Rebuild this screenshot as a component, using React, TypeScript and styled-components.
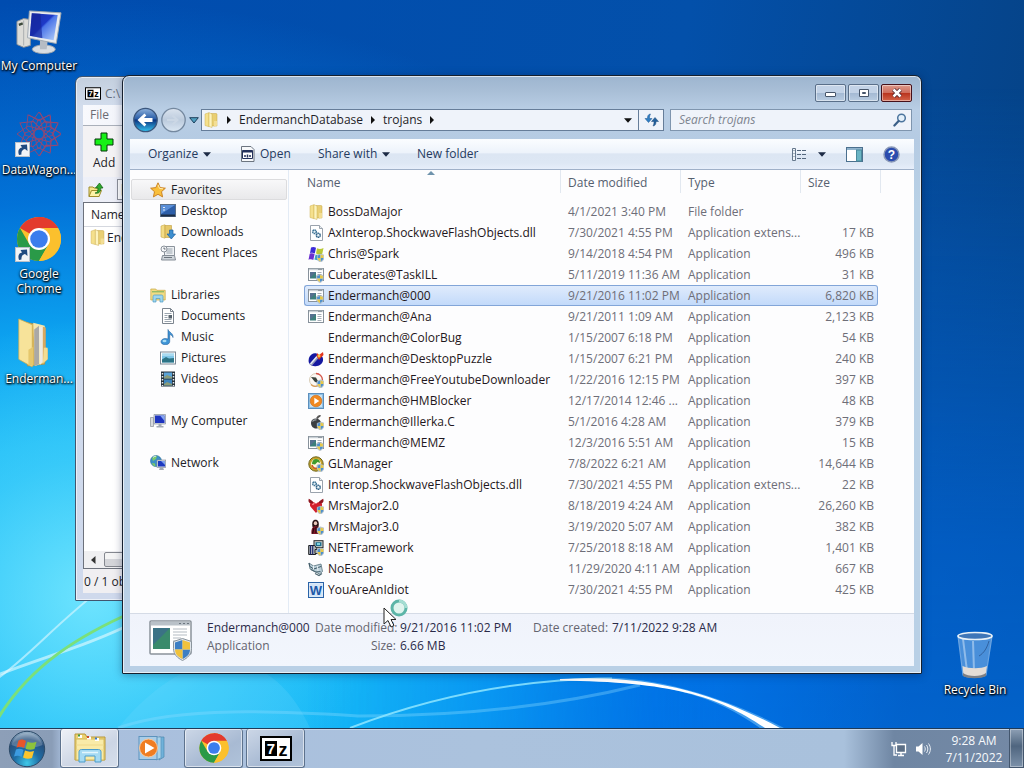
import React from "react";
import styled, { createGlobalStyle, css } from "styled-components";

const GlobalStyle = createGlobalStyle`
  * { box-sizing: border-box; }
  body {
    margin: 0;
    font-family: "Open Sans", "Noto Sans", sans-serif;
    font-size: 12px;
    line-height: 16px;
    color: #1e1e28;
  }
  button, input {
    font: inherit;
    color: inherit;
    margin: 0;
    padding: 0;
    border: 0;
    background: none;
  }
  ul { list-style: none; margin: 0; padding: 0; }
  svg { display: block; flex: none; }
`;

/* ---------- desktop ---------- */

const Screen = styled.div`
  display: flex;
  flex-direction: column;
  height: 100vh;
  overflow: hidden;
`;

const Desktop = styled.main`
  position: relative;
  flex: 1;
  min-height: 0;
  overflow: hidden;
  background:
    radial-gradient(ellipse 28% 38% at 9% 82%, rgba(125, 235, 255, 0.85) 0%, rgba(90, 220, 252, 0.5) 50%, transparent 100%),
    radial-gradient(ellipse 80% 92% at 8% 92%, #16baf8 0%, #14b6f6 34%, #0ca2f0 50%, rgba(2, 124, 226, 0.8) 70%, transparent 100%),
    linear-gradient(100deg, #004cb0 0%, #0350aa 60%, #06407f 100%);
  background-color: #0350aa;
`;

const Glow = styled.div`
  position: absolute;
  inset: 0;
  background: linear-gradient(180deg, transparent 12%, rgba(0, 112, 240, 0.55) 75%, rgba(0, 120, 250, 0.6) 100%);
  mask-image: linear-gradient(90deg, transparent 30%, #000 70%);
`;

const Wallpaper = styled.svg`
  position: absolute;
  left: 0;
  bottom: 0;
  width: 100%;
  height: 180px;
`;

const Shortcut = styled.button<{ $x: number; $y: number }>`
  position: absolute;
  left: ${(p) => p.$x}px;
  top: ${(p) => p.$y}px;
  width: 78px;
  display: flex;
  flex-direction: column;
  align-items: center;
  gap: 3px;
  line-height: 15px;
  color: #fff;
  text-align: center;
  text-shadow: 0 1px 2px #000, 1px 1px 2px #000, 0 0 3px rgba(0, 0, 0, 0.6);
`;

const BinShortcut = styled(Shortcut)`
  left: auto;
  top: auto;
  right: 10px;
  bottom: 31px;
`;

/* ---------- windows ---------- */

const WindowFrame = styled.section`
  position: absolute;
  display: flex;
  flex-direction: column;
  border: 1px solid #16202e;
  border-radius: 7px 7px 1px 1px;
`;

const ArchiveWindow = styled(WindowFrame)`
  left: 75px;
  top: 76px;
  bottom: 127px;
  width: 200px;
  padding: 0 7px 7px;
  border-color: #41566f;
  background: linear-gradient(180deg, #c3cfde 0, #d3dded 30px, #cfd9ec 100%);
  box-shadow: inset 0 0 0 1px rgba(255, 255, 255, 0.6);
`;

const ArchiveTitle = styled.div`
  display: flex;
  align-items: center;
  gap: 4px;
  height: 28px;
  padding: 5px 2px 0;
  color: #67707e;
`;

const ArchiveMenu = styled.div`
  height: 20px;
  padding: 0 7px;
  display: flex;
  align-items: center;
  color: #6b6b72;
  background: linear-gradient(90deg, #f8f9fd, #dfe4f1);
`;

const ArchiveTools = styled.div`
  height: 52px;
  padding: 6px 10px 0;
  border-top: 1px solid #aab0ba;
  background: #f3f2f4;
`;

const AddButton = styled.button`
  display: flex;
  flex-direction: column;
  align-items: center;
  gap: 3px;
`;

const ArchivePath = styled.div`
  display: flex;
  align-items: center;
  gap: 13px;
  height: 25px;
  padding: 0 5px;
  background: linear-gradient(90deg, #eef0f8, #e3e6f1);
`;

const PathBox = styled.div`
  flex: 1;
  height: 21px;
  padding: 2px;
  border: 1px solid #8d9099;
  background: #fff;
`;

const ArchiveList = styled.div`
  flex: 1;
  display: flex;
  flex-direction: column;
  border: 1px solid #6d727c;
  background: #fff;
`;

const ArchiveHeader = styled.div`
  height: 24px;
  padding: 4px 7px;
  border-bottom: 1px solid #d5d8df;
`;

const ArchiveItem = styled.div`
  display: flex;
  align-items: center;
  gap: 1px;
  height: 21px;
  padding: 0 5px;
`;

const ScrollTrack = styled.div`
  display: flex;
  align-items: center;
  gap: 8px;
  height: 17px;
  margin-top: auto;
  padding-left: 7px;
  background: #efeff1;
`;

const ScrollThumb = styled.div`
  flex: 1;
  height: 15px;
  border: 1px solid #85888f;
  border-radius: 2px;
  background: linear-gradient(180deg, #f4f4f4 0 50%, #d4d5d9 50% 100%);
`;

const ArchiveStatus = styled.div`
  height: 24px;
  padding: 5px 1px;
  background: #f0eff2;
`;

const ExplorerWindow = styled(WindowFrame)`
  left: 122px;
  top: 75px;
  right: 102px;
  bottom: 54px;
  padding: 0 7px 7px;
  background: linear-gradient(180deg, #9db5cf 0, #a8bed6 14px, #b9cee5 34px, #b5cbe3 64px, #b9d1e6 130px, #b9d0e6 100%);
  box-shadow: inset 0 0 0 1px rgba(255, 255, 255, 0.65), 0 1px 8px rgba(0, 20, 60, 0.35);
`;

const TitleBar = styled.header`
  display: flex;
  justify-content: flex-end;
  align-items: flex-end;
  gap: 2px;
  height: 26px;
  padding-right: 2px;
`;

const CaptionButton = styled.button<{ $close?: boolean }>`
  display: grid;
  place-items: center;
  width: 31px;
  height: 18px;
  border: 1px solid #5a6f89;
  border-radius: 2px;
  box-shadow: inset 0 0 0 1px rgba(255, 255, 255, 0.45);
  background: linear-gradient(180deg, #c3d3e7 0 50%, #a3b9d3 50%, #b9cde2 100%);
  ${(p) =>
    p.$close &&
    css`
      border-color: #45101a;
      background: linear-gradient(180deg, #dd9a8c 0%, #cf6d5c 48%, #b8321c 50%, #d4644a 100%);
    `}
`;

const NavRow = styled.div`
  display: flex;
  align-items: center;
  height: 37px;
  padding: 0 2px 1px 3px;
`;

const HistoryButtons = styled.div`
  display: flex;
  align-items: center;
  gap: 3px;
  padding-right: 2px;
`;

const AddressBar = styled.nav`
  flex: 1;
  display: flex;
  align-items: center;
  height: 22px;
  border: 1px solid #667d99;
  background: #eff3fa;
`;

const Crumbs = styled.div`
  flex: 1;
  display: flex;
  align-items: center;
  gap: 8px;
  padding-left: 1px;
`;

const RefreshButton = styled.button`
  display: grid;
  place-items: center;
  align-self: stretch;
  width: 25px;
  margin-left: 6px;
  border-left: 1px solid #667d99;
`;

const SearchBox = styled.label`
  display: flex;
  align-items: center;
  width: 242px;
  height: 22px;
  margin-left: 6px;
  padding: 0 4px 0 8px;
  border: 1px solid #7f95ae;
  background: #eff3fa;
`;

const SearchInput = styled.input`
  flex: 1;
  min-width: 0;
  outline: 0;
  &::placeholder {
    color: #7d848f;
    font-style: italic;
    opacity: 1;
  }
`;

const CommandBar = styled.div`
  display: flex;
  align-items: center;
  height: 31px;
  padding: 0 14px 0 18px;
  border-bottom: 1px solid #9fb0c8;
  color: #253a5e;
  background: linear-gradient(180deg, #fbfdff 0%, #edf3fb 45%, #dce6f3 50%, #dde7f4 80%, #e6eefa 100%);
`;

const CommandButton = styled.button<{ $width?: number }>`
  display: flex;
  align-items: center;
  gap: 5px;
  width: ${(p) => (p.$width ? `${p.$width}px` : "auto")};
  white-space: nowrap;
`;

const ViewTools = styled.div`
  display: flex;
  align-items: center;
  gap: 20px;
  margin-left: auto;
`;

const ViewButton = styled(CommandButton)`
  gap: 10px;
`;

const Body = styled.div`
  flex: 1;
  display: flex;
  min-height: 0;
  background: #fdfdfe;
`;

const Sidebar = styled.aside`
  display: flex;
  flex-direction: column;
  gap: 21px;
  width: 159px;
  padding: 9px 1px 0;
  border-right: 1px solid #e3ebf5;
  overflow: hidden;
`;

const NavItem = styled.a<{ $child?: boolean; $active?: boolean }>`
  display: flex;
  align-items: center;
  gap: 5px;
  height: 21px;
  padding-left: ${(p) => (p.$child ? 28 : 18)}px;
  border: 1px solid ${(p) => (p.$active ? "#dcdcde" : "transparent")};
  border-radius: 2px;
  background: ${(p) => (p.$active ? "linear-gradient(180deg, #f8f8f9, #e9e9eb)" : "none")};
  color: inherit;
  text-decoration: none;
  white-space: nowrap;
`;

const FilePane = styled.div`
  flex: 1;
  min-width: 0;
  padding-left: 15px;
  overflow: auto;
`;

const FileTable = styled.table`
  table-layout: fixed;
  width: 577px;
  border-collapse: separate;
  border-spacing: 0;
`;

const HeadCell = styled.th<{ $first?: boolean }>`
  position: relative;
  height: 31px;
  padding: 0;
  vertical-align: top;
  text-align: left;
  font-weight: 400;
  color: #55606f;
  > span {
    display: block;
    height: 23px;
    padding: 5px 0 0 ${(p) => (p.$first ? 3 : 7)}px;
    border-right: 1px solid #e2e8f0;
  }
`;

const SortMark = styled.svg`
  position: absolute;
  left: 50%;
  top: 1px;
  margin-left: -6px;
`;

const Cell = styled.td<{ $right?: boolean }>`
  height: 21px;
  padding: 0 ${(p) => (p.$right ? 4 : 0)}px 0 7px;
  text-align: ${(p) => (p.$right ? "right" : "left")};
  line-height: 19px;
  border: 0 solid transparent;
  border-width: 1px 0;
  color: #6e6e78;
  white-space: nowrap;
  overflow: hidden;
  text-overflow: ellipsis;
`;

const NameCell = styled(Cell)`
  padding-left: 4px;
  color: #1f1720;
`;

const FileName = styled.span`
  display: flex;
  align-items: center;
  gap: 4px;
`;

const FileRow = styled.tr<{ $selected?: boolean }>`
  ${(p) =>
    p.$selected &&
    css`
      ${Cell} {
        background: linear-gradient(180deg, #dfebfc, #c3dafa);
        border-color: #82a5d8;
      }
      ${Cell}:first-child {
        border-left: 1px solid #82a5d8;
        border-radius: 3px 0 0 3px;
        padding-left: 3px;
      }
      ${Cell}:last-child {
        border-right: 1px solid #82a5d8;
        border-radius: 0 3px 3px 0;
        padding-right: 3px;
      }
    `}
`;

const DetailsPane = styled.footer`
  display: flex;
  align-items: flex-start;
  gap: 14px;
  height: 53px;
  padding: 5px 19px 0;
  border-top: 1px solid #d5dbe6;
  background: linear-gradient(180deg, #f0f3fb, #f2f6fd);
`;

const DetailsGrid = styled.dl`
  display: grid;
  grid-template-columns: 104px 81px 129px 75px auto;
  grid-auto-rows: 18px;
  column-gap: 4px;
  margin: 0;
  padding-top: 1px;
  color: #64646f;
  white-space: nowrap;
`;

const Term = styled.dt`
  text-align: right;
`;

const Value = styled.dd<{ $muted?: boolean }>`
  margin: 0;
  color: ${(p) => (p.$muted ? "#64646f" : "#2a2a48")};
`;

const Cursor = styled.svg`
  position: absolute;
  left: 383px;
  top: 598px;
`;

/* ---------- taskbar ---------- */

const Taskbar = styled.footer`
  display: flex;
  align-items: stretch;
  height: 40px;
  border-top: 1px solid #1f3a58;
  box-shadow: inset 0 1px 0 #c5d6ea;
  background: linear-gradient(90deg, #8d9fb8 0, #8a9db7 52px, #a9bfdd 64px, #abc2dd 480px, #a9c1dc calc(100% - 180px), #6f86a3 calc(100% - 130px), #7489a5 100%);
`;

const StartButton = styled.button`
  width: 60px;
  padding-left: 8px;
`;

const TaskList = styled.div`
  flex: 1;
  display: flex;
  gap: 3px;
`;

const TaskButton = styled.button<{ $open?: boolean; $front?: boolean }>`
  display: grid;
  place-items: center;
  width: 59px;
  border: 1px solid ${(p) => (p.$open ? "#5d728d" : "transparent")};
  border-top: 0;
  border-radius: 3px;
  ${(p) =>
    p.$open &&
    css`
      box-shadow: inset 0 0 0 1px rgba(255, 255, 255, 0.55);
      background: ${p.$front
        ? "linear-gradient(150deg, #eef1f7, #ccd5e4 60%, #d6dfec)"
        : "linear-gradient(150deg, #ccd7e7, #a8bad3 60%, #b0c3da)"};
    `}
`;

const Tray = styled.div`
  display: flex;
  align-items: center;
  gap: 8px;
  color: #fff;
`;

const Clock = styled.time`
  width: 70px;
  text-align: center;
  line-height: 17px;
  color: #f6f9fc;
`;

const ShowDesktop = styled.button`
  width: 15px;
  border: 1px solid #43566d;
  border-top: 0;
  box-shadow: inset 0 0 0 1px rgba(255, 255, 255, 0.35);
  background: linear-gradient(180deg, #8ea0b5, #4f657f 45%, #7c91a9);
`;

/* ---------- icons ---------- */

type IconProps = { size?: number };

const Shield = ({ x = 9, y = 8 }: { x?: number; y?: number }) => (
  <g transform={`translate(${x} ${y})`}>
    <path d="M0 1.2 3.5 0 7 1.2V4c0 2-1.6 3.3-3.5 4C1.600 7.300 0 6 0 4Z" fill="#dfe8ef" stroke="#7f8f9c" strokeWidth=".5" />
    <path d="M.6 1.600 3.500.600V4H.6Z" fill="#4d8fca" />
    <path d="M3.500 4h2.900c0 1.600-1.200 2.700-2.900 3.400Z" fill="#4d8fca" />
    <path d="M3.500.6 6.400 1.600V4H3.500ZM.6 4h2.900v3.400C1.800 6.700.6 5.600.6 4Z" fill="#e6c84a" />
  </g>
);

const FolderIcon = ({ size = 16 }: IconProps) => (
  <svg width={size} height={size} viewBox="0 0 16 16">
    <path d="M2 2 6 .7v14L2 13.500Z" fill="#f5e08c" stroke="#cfb355" strokeWidth=".5" />
    <path d="M8 1.500h5c.6 0 1 .4 1 1v11.500H8Z" fill="#e9cf74" stroke="#c5a447" strokeWidth=".5" />
    <path d="M6 .7 9 2v13.500L6 14.500Z" fill="#fdf3bd" stroke="#cdb053" strokeWidth=".5" />
    <path d="M11 9h3v4.500l-3 1.500Z" fill="#f3de95" />
  </svg>
);

const WindowAppIcon = ({ shield }: { shield?: boolean }) => (
  <svg width="16" height="16" viewBox="0 0 16 16">
    <rect x=".5" y="1.500" width="15" height="12" fill="#fff" stroke="#87919b" />
    <path d="M1 2.500h14" stroke="#c9d0d6" strokeWidth="1.500" />
    <path d="M10.500 2.500h1M12.500 2.500h1" stroke="#5a6670" />
    <rect x="2" y="5" width="6" height="6.500" fill="#3d7f7b" />
    <path d="M2 5h6l-6 6Z" fill="#55708f" />
    <path d="M9.500 5.500h4M9.500 7.500h4M9.500 9.500h4M9.500 11.500h4" stroke="#a6afb8" />
    {shield && <Shield x={8.500} y={7.500} />}
  </svg>
);

const DllIcon = () => (
  <svg width="16" height="16" viewBox="0 0 16 16">
    <path d="M2.500.500h9l3 3v12h-12Z" fill="#fff" stroke="#9aa3ad" />
    <path d="M11.500.500v3h3" fill="#e8edf2" stroke="#9aa3ad" />
    <circle cx="6.500" cy="6.800" r="1.800" fill="#e6f1f7" stroke="#3f7496" strokeWidth="1.500" strokeDasharray="1.500 .4" />
    <circle cx="10.300" cy="10.300" r="2" fill="#e6f1f7" stroke="#2f6287" strokeWidth="1.500" strokeDasharray="1.500 .4" />
  </svg>
);

const FlagIcon = () => (
  <svg width="16" height="16" viewBox="0 0 16 16">
    <path d="M3 1.500c2-1 3.500-.5 5 .3L6.800 7.500c-1.600-.8-3-1-4.800-.3Z" fill="#3b2bd8" />
    <path d="M9 2.300c2 1 4 1 6.500-.2l-1.200 5.600c-2.200 1-4 .8-6.300-.2Z" fill="#b9c936" />
    <path d="M1.700 7.800c2-.9 3.400-.5 4.900.2L5.300 14C3.800 13.200 2.400 13 .5 13.800Z" fill="#6a2fd0" />
    <path d="M7.600 8.500c2.100.9 3.900 1 6.200.2l-1.200 5c-2.200.9-4 .7-6.200-.2Z" fill="#3aa5c8" />
    <Shield />
  </svg>
);

const PuzzleIcon = () => (
  <svg width="16" height="16" viewBox="0 0 16 16">
    <path d="M3.500 3.500C6 1.500 9 2 10.500 4c3 0 5 2 4.500 5.500-.5 3.500-4 6-8 5.700C3 15 .3 12.500.6 9.500.8 6.500 1.500 5 3.500 3.500Z" fill="#1518a0" />
    <path d="m2.500 14 7-8" stroke="#8f96b8" strokeWidth="3" />
    <path d="m2.500 13 6.500-7.500" stroke="#e9ecf5" strokeWidth="1.200" />
    <path d="m9 2 2 2 4-3 .5 3-2.500 2.500L11 9 8.500 5Z" fill="#e2341e" />
    <circle cx="11" cy="5" r="1.500" fill="#f5c33a" />
  </svg>
);

const DownloaderIcon = () => (
  <svg width="16" height="16" viewBox="0 0 16 16">
    <circle cx="8" cy="8" r="6.500" fill="#fbf8f4" stroke="#d9cdb8" />
    <path d="M8 1.500a6.500 6.500 0 0 1 6.500 6.500" fill="none" stroke="#d65348" strokeWidth="1.300" />
    <path d="M3 5l5 .5 3 5.500-4-1Z" fill="#3a423c" />
    <path d="M3 12.500c2 2 5 2 7 1" fill="none" stroke="#d89a54" strokeWidth="1.300" />
    <Shield />
  </svg>
);

const PlayTileIcon = () => (
  <svg width="16" height="16" viewBox="0 0 16 16">
    <rect x=".5" y=".5" width="15" height="15" fill="#8fc1e6" stroke="#5c8fbd" />
    <rect x="2" y="2" width="12" height="12" fill="#c9e1f1" />
    <circle cx="8" cy="8" r="5.800" fill="#f0881f" stroke="#c96613" strokeWidth=".6" />
    <path d="M6.300 4.800 11.300 8l-5 3.200Z" fill="#fff" />
  </svg>
);

const BombIcon = () => (
  <svg width="16" height="16" viewBox="0 0 16 16">
    <path d="M9 4.500c1-2 2-3 3.500-2.500" fill="none" stroke="#555" strokeWidth="2" />
    <path d="M3 9c0-3 2-4.500 5-4.500S13 7 13 9.500s-2 5-5 5-5-2.500-5-5.500Z" fill="#3b3e42" />
    <path d="M4.500 7.500c1-1.500 2.500-2 4-1.500" stroke="#9ea3a8" fill="none" strokeWidth="1.300" />
    <Shield />
  </svg>
);

const ManagerIcon = () => (
  <svg width="16" height="16" viewBox="0 0 16 16">
    <circle cx="8" cy="8" r="7.200" fill="#c8a42c" stroke="#6d6418" />
    <circle cx="8" cy="8" r="5" fill="#fff8dc" />
    <path d="M4 8c0-3 1.500-5 4-5s4 1.500 4 4L9.500 6 7 8.500Z" fill="#3f9a2c" />
    <path d="M4 9c.5 3 3 4 6 3" stroke="#cc5a24" fill="none" strokeWidth="1.600" />
    <Shield />
  </svg>
);

const HeartIcon = () => (
  <svg width="16" height="16" viewBox="0 0 16 16">
    <path d="M8 15 2.800 9C1 7 2 4 4.800 4 6.300 4 7.500 5 8 6c.5-1 1.700-2 3.200-2C14 4 15 7 13.200 9Z" fill="#d3202e" />
    <path d="M5 5C1.500 6.500-.3 3.800.8.8c1 .9 3 1.200 4.200 3M11 5c3.500 1.500 5.300-1.200 4.200-4.200-1 .9-3 1.200-4.200 3" fill="#8f1620" />
    <path d="M4.500 7c.5-1 1-1.500 2-1.300" stroke="#ff9aa0" fill="none" strokeWidth="1.200" />
    <Shield />
  </svg>
);

const FigureIcon = () => (
  <svg width="16" height="16" viewBox="0 0 16 16">
    <path d="M4.500 8C3.500 3 5 .8 7.500.8S11.500 3 10.500 8Z" fill="#2a1416" />
    <ellipse cx="7.500" cy="4.300" rx="1.700" ry="2" fill="#e9c9bd" />
    <path d="M3.500 15C3 11 4 7 7.500 7s4.500 4 4 8Z" fill="#7c1626" />
    <path d="M4.500 14.500 6 9M8 8v6" stroke="#2b0a10" strokeWidth="1.200" />
    <Shield />
  </svg>
);

const FrameworkIcon = () => (
  <svg width="16" height="16" viewBox="0 0 16 16">
    <rect x="6" y=".7" width="9" height="7" fill="#d5d8d4" stroke="#23262a" />
    <rect x="7.500" y="2.200" width="6" height="4" fill="#1e6f8f" />
    <path d="M9 3h3v2H9Z" fill="#7fd3e0" />
    <path d="M.7 5.500h6l2 3-1 6h-7Z" fill="#b4babd" stroke="#1d1f22" />
    <path d="M2.500 5v9.500M4.700 5.500v9" stroke="#1f2a70" strokeWidth="1.200" />
    <path d="M7 9.500h7.500v4H7Z" fill="#c7c9bd" stroke="#23262a" />
    <Shield />
  </svg>
);

const EscapeIcon = () => (
  <svg width="16" height="16" viewBox="0 0 16 16">
    <path d="m1 2 4.500 3L13 3l1.500 7.500-3 2.500L2 8Z" fill="#b9ced8" stroke="#58727e" strokeWidth=".8" />
    <path d="m1 2 .8 3.500 4 2.500L13 5.500" fill="none" stroke="#3c5663" />
    <path d="m3 8.500 4.500 2.500 5-.5M7 12.500l4 2 3-2" fill="none" stroke="#4e6874" strokeWidth="1.100" />
    <path d="M5.500 5v3.500M9.500 5l.5 5" stroke="#eaf2f6" />
  </svg>
);

const WordIcon = () => (
  <svg width="16" height="16" viewBox="0 0 16 16">
    <rect x=".5" y=".5" width="15" height="15" fill="#dceaf9" stroke="#2a63a8" />
    <path d="M2 2h12v12H2Z" fill="#d3e4f7" />
    <text x="8" y="13" textAnchor="middle" fontFamily="Liberation Sans, sans-serif" fontWeight="700" fontSize="13" fill="#1c58a8">W</text>
  </svg>
);

const StarIcon = () => (
  <svg width="16" height="16" viewBox="0 0 16 16">
    <path d="m8 .8 2.200 4.800 5.200.6-3.900 3.500 1.100 5.200L8 12.300l-4.600 2.600 1.100-5.200L.6 6.200l5.200-.6Z" fill="#f9bf3b" stroke="#c67a1c" strokeWidth=".9" />
    <path d="m8 2.800 1.500 3.600 3.500.4" fill="none" stroke="#fdebb0" />
  </svg>
);

const DesktopPlaceIcon = () => (
  <svg width="16" height="16" viewBox="0 0 16 16">
    <rect x=".5" y="1.500" width="15" height="12" fill="#2d5ea8" stroke="#5a6f88" />
    <path d="M1 2h14L1 11Z" fill="#5a8fd8" />
    <path d="M1 12.500h14" stroke="#1c2d44" strokeWidth="2" />
    <path d="M3 4.500h2M3 7h2" stroke="#dfe9f5" />
  </svg>
);

const DownloadsIcon = () => (
  <svg width="16" height="16" viewBox="0 0 16 16">
    <path d="M1 2 5 .7v13.500L1 13Z" fill="#f3dc86" stroke="#c9aa4a" strokeWidth=".6" />
    <path d="M5 1.500h6.500v12H5Z" fill="#e6c869" stroke="#c09c3c" strokeWidth=".6" />
    <path d="M9.500 6h3.500v4h2.500l-4.200 5-4.300-5h2.500Z" fill="#3d8fd0" stroke="#1f62a0" strokeWidth=".7" />
  </svg>
);

const RecentIcon = () => (
  <svg width="16" height="16" viewBox="0 0 16 16">
    <path d="M4.500 1.500h10v9h-10Z" fill="#eef1f4" stroke="#8b939c" />
    <path d="M6.500 4h6M6.500 6h6M6.500 8h6" stroke="#9aa4ae" />
    <circle cx="4" cy="4" r="3" fill="#f7f8fa" stroke="#8b939c" />
    <path d="M4 2.500V4h1.500" fill="none" stroke="#5c6670" />
    <path d="m2.500 10.500h12l1 4.500h-14Z" fill="#cfd5db" stroke="#858d96" />
    <path d="M4 12.500h8" stroke="#6c757e" />
  </svg>
);

const LibrariesIcon = () => (
  <svg width="16" height="16" viewBox="0 0 16 16">
    <path d="M.8 3.500V2h5l1 1.300h8.400V13H.8Z" fill="#f2dc85" stroke="#c7a844" strokeWidth=".7" />
    <path d="M2 4.800h12" stroke="#6fae5c" />
    <path d="M3 15V9.500c0-1 .6-1.500 1.500-1.500h7c.9 0 1.500.5 1.500 1.500V15h-3v-3.500H6V15Z" fill="#9fd6ef" stroke="#4d9cc4" strokeWidth=".7" />
  </svg>
);

const DocumentIcon = () => (
  <svg width="16" height="16" viewBox="0 0 16 16">
    <path d="M2.500.500h8l3 3v12h-11Z" fill="#fff" stroke="#7c858f" />
    <path d="M10.500.500v3h3" fill="none" stroke="#7c858f" />
    <path d="M4.500 5.500h7M4.500 7.500h3M4.500 9.500h3M4.500 11.500h7M4.500 13.500h7" stroke="#9ba5af" />
    <rect x="8.500" y="7" width="3.500" height="3.500" fill="#58646e" />
  </svg>
);

const MusicIcon = () => (
  <svg width="16" height="16" viewBox="0 0 16 16">
    <path d="M8 .5c.5 2.500 5.500 3.500 5 8-.6-1.800-1.800-2.700-3.300-3v7c0 2-2 3.300-4.400 3.300S1 14.500 1 12.700s2-3.200 4.300-3.200c1 0 1.900.2 2.700.6Z" fill="#3e94d6" stroke="#225f9c" strokeWidth=".6" />
    <ellipse cx="4.500" cy="12" rx="2" ry="1.300" fill="#a7dcf5" />
  </svg>
);

const PicturesIcon = () => (
  <svg width="16" height="16" viewBox="0 0 16 16">
    <rect x=".5" y="2" width="15" height="12" fill="#fff" stroke="#7d8894" />
    <rect x="2" y="3.500" width="12" height="9" fill="#7fc6e8" />
    <path d="m2 9.500 4-2.500 3 1.500 5-.5v4.500H2Z" fill="#2d7486" />
    <path d="M2 5h12" stroke="#d3eefa" />
  </svg>
);

const VideosIcon = () => (
  <svg width="16" height="16" viewBox="0 0 16 16">
    <rect x="1" y=".5" width="14" height="15" fill="#26323c" />
    <rect x="4" y="1.500" width="8" height="6" fill="#5aa3d8" />
    <rect x="4" y="8.500" width="8" height="6" fill="#3f86be" />
    <path d="m4 6 3-2 5 2v1.500H4ZM4 13l3-2 5 2v1.500H4Z" fill="#8a9c7a" />
    <path d="M2.500 2v13M13.500 2v13" stroke="#e6ebee" strokeWidth="1.500" strokeDasharray="1.500 1.500" />
  </svg>
);

const ComputerIcon = ({ size = 16 }: IconProps) => (
  <svg width={size} height={size} viewBox="0 0 48 48">
    <defs>
      <linearGradient id="screenBlue" x1="0" y1="0" x2="1" y2="1">
        <stop offset="0" stopColor="#1a2fa8" />
        <stop offset=".45" stopColor="#1d39c8" />
        <stop offset=".5" stopColor="#4b75e8" />
        <stop offset="1" stopColor="#b8d4fb" />
      </linearGradient>
    </defs>
    <path d="m1 13 7-3 7 1v27l-7 2-7-3Z" fill="#dcdcd8" stroke="#8d9299" />
    <path d="M3 16.500 7 15" stroke="#3d4a3c" strokeWidth="2.500" />
    <path d="M8 12v26" stroke="#a9acae" />
    <ellipse cx="29" cy="42" rx="12" ry="4.500" fill="#d9dde2" stroke="#9ea5ad" />
    <path d="m25 32 8 2-1 8h-7Z" fill="#b6bcc4" />
    <path d="m14 2 33 2-5 32-30-6Z" fill="#e8ebee" stroke="#a0a8b1" />
    <path d="m16.500 4.500 27 1.700-4.200 26.500-24.800-4.700Z" fill="url(#screenBlue)" />
    <path d="m16.500 4.500 9 .5 2 25.500-13-2.500Z" fill="#14259a" opacity=".65" />
  </svg>
);

const SmallComputerIcon = () => (
  <svg width="16" height="16" viewBox="0 0 16 16">
    <path d="M.5 4.500h3v9h-3Z" fill="#d7dade" stroke="#8a9098" strokeWidth=".7" />
    <path d="M4 1.500h11.500v9.500H4Z" fill="#d9dde4" stroke="#8790a0" strokeWidth=".7" />
    <path d="M5 2.500h9.500V10H5Z" fill="#1d34c0" />
    <path d="M10 2.500h4.500V8Z" fill="#86a6f0" />
    <path d="M8.500 11h3v2h2v1.500h-7V13h2Z" fill="#a2aab4" />
  </svg>
);

const NetworkIcon = () => (
  <svg width="16" height="16" viewBox="0 0 16 16">
    <circle cx="6" cy="6" r="5.500" fill="#3b8fc8" stroke="#2a6c94" strokeWidth=".6" />
    <path d="M2 3c2-2 4-2.500 5-2l-1 3-3 2ZM2 8l3 .5.500 3C3.500 11 2 9.500 2 8Z" fill="#7cc96a" />
    <path d="M3 2.500c1-1 2-1.300 3-1.200" stroke="#dff3fb" fill="none" />
    <rect x="7" y="5" width="8.700" height="7.500" fill="#d5dae2" stroke="#7f8894" strokeWidth=".6" />
    <path d="M8 6h7v5.500H8Z" fill="#1d39c0" />
    <path d="M11 6h4v4Z" fill="#7fa2ee" />
    <path d="M9 15h5l-1-2.500h-3Z" fill="#a2aab4" />
  </svg>
);

const SevenZipIcon = ({ w = 16, h = 13 }: { w?: number; h?: number }) => (
  <svg width={w} height={h} viewBox="0 0 32 25">
    <rect x="1" y="1" width="30" height="23" fill="#fff" stroke="#000" strokeWidth="2" />
    <rect x="5" y="5" width="12" height="15" fill="#000" />
    <text x="11" y="18" textAnchor="middle" fontFamily="Liberation Sans, sans-serif" fontWeight="700" fontSize="15" fill="#fff">7</text>
    <text x="23" y="20" textAnchor="middle" fontFamily="Liberation Sans, sans-serif" fontWeight="700" fontSize="18" fill="#000">z</text>
  </svg>
);

const PlusIcon = () => (
  <svg width="20" height="20" viewBox="0 0 20 20">
    <path d="M7 1h6v6h6v6h-6v6H7v-6H1V7h6Z" fill="#16f016" stroke="#05350a" />
  </svg>
);

const UpFolderIcon = () => (
  <svg width="16" height="16" viewBox="0 0 16 16">
    <path d="M1 5h4l1 1h5v8.500H1Z" fill="#f4e58a" stroke="#a08e2c" />
    <path d="m1 14.500 2.500-6h10L11 14.500Z" fill="#fdf3a8" stroke="#a08e2c" />
    <path d="M7 11c2 0 3-1.500 3-5H7.500L11.500 1l3.500 5h-2.200C13 10 10.500 12 7 11Z" fill="#2fa82f" stroke="#126012" strokeWidth=".7" />
  </svg>
);

const ArrowOverlay = ({ y = 30 }: { y?: number }) => (
  <g transform={`translate(0 ${y})`}>
    <rect x=".5" y=".5" width="14" height="14" fill="#f2f4f7" stroke="#b9c0c8" />
    <path d="M4 13C2.500 8.500 4 6 7 5.500L5.500 3 12 2.500 12.500 9 10 7C8 7.500 6 9 6.500 12.500Z" fill="#204a80" />
  </g>
);

const WagonIcon = () => (
  <svg width="48" height="48" viewBox="0 0 48 48">
    <g fill="none" stroke="#b8405c" strokeWidth=".9" opacity=".8">
      {[0, 30, 60, 90, 120, 150].map((a) => (
        <g key={a} transform={`rotate(${a} 24 23)`}>
          <path d="M2 23 13 15 24 18 35 15 46 23 35 31 24 28 13 31Z" />
          <path d="M14 4 24 10 34 4" />
        </g>
      ))}
      <circle cx="24" cy="23" r="5" />
    </g>
    <ArrowOverlay y={31} />
  </svg>
);

const ChromeMark = () => (
  <g>
    <circle cx="24" cy="24" r="22" fill="#fbc02d" />
    <path d="M24 24 4.950 13A22 22 0 0 1 43.050 13Z" fill="#e33b2e" />
    <path d="M24 2a22 22 0 0 1 19.050 11H24Z" fill="#e33b2e" />
    <path d="M4.950 13A22 22 0 0 0 24 46l9.500-16.500L24 24 14.500 29.500Z" fill="#2a9a48" />
    <path d="M33.500 29.500 24 46A22 22 0 0 0 43.050 13H24a11 11 0 0 1 9.500 16.500Z" fill="#fbc02d" />
    <circle cx="24" cy="24" r="11" fill="#fff" />
    <circle cx="24" cy="24" r="8.800" fill="#3b7ded" />
  </g>
);

const ChromeIcon = ({ size = 48, shortcut }: IconProps & { shortcut?: boolean }) => (
  <svg width={size} height={size} viewBox="0 0 48 48">
    <ChromeMark />
    {shortcut && <ArrowOverlay y={32} />}
  </svg>
);

const BigFolderIcon = () => (
  <svg width="48" height="50" viewBox="0 0 48 52">
    <g transform="translate(-2 0)">
      <path d="m10 4 20 4 2 4v36l-18 2Z" fill="#d7b458" stroke="#a8873a" strokeWidth=".6" />
      <path d="m20 5 12 3v38l-10 4Z" fill="#f4e6ae" />
      <path d="m21 12 5-4v40l-5 2Z" fill="#aaa9a6" />
      <path d="m26 10 4-1v36l-3 4Z" fill="#eceae4" />
      <path d="m30 9 3 1v20l2 3v10l-5 5Z" fill="#d9a860" />
      <path d="M5 1 19 7v44L5 43Z" fill="#f7e39a" stroke="#cfae52" strokeWidth=".8" />
      <path d="m15 33 5-3v20l-5-1Z" fill="#e6c76c" />
      <path d="M31 31h4v12l-5 4Z" fill="#f2dc92" />
    </g>
  </svg>
);

const BinIcon = () => (
  <svg width="40" height="48" viewBox="0 0 40 48">
    <path d="m3 5 5 39c3 3 19 3 23 0l6-39Z" fill="#8fc0ee" opacity=".5" stroke="#d5e9fb" strokeWidth="1.200" />
    <path d="m8 8 4 32M18 10l1 30" stroke="#e4f1fd" strokeWidth="2" opacity=".45" />
    <path d="M34 10c-2 7-5 12-10 15" fill="none" stroke="#274f86" opacity=".7" />
    <path d="m7.500 35 1 9c4 3 18 3 22 0l1.500-9c-6 3-18 3-24.500 0Z" fill="#e3dcd6" />
    <path d="M8 42c5 4 18 4 23 0v3c-5 3-18 3-23 0Z" fill="#7d7f85" />
    <ellipse cx="20" cy="5" rx="17" ry="3.500" fill="#3f76b8" stroke="#e8f1f8" strokeWidth="1.600" />
  </svg>
);

const LargeAppIcon = () => (
  <svg width="44" height="42" viewBox="0 0 44 42">
    <rect x="1" y="2" width="41" height="33" rx="1" fill="#fff" stroke="#8b939b" strokeWidth="1.500" />
    <path d="M2 4.500h39" stroke="#b9c1c8" strokeWidth="4" />
    <path d="M30 4.500h2M34 4.500h2M38 4.500h2" stroke="#6c767f" />
    <path d="M4 9h17v21H4Z" fill="#3a8a6c" />
    <path d="M4 9h17L4 26Z" fill="#3c6c8c" opacity=".8" />
    <path d="M24 10h14M24 13h14M24 16h14M24 19h8M24 22h8M24 25h5M24 28h5" stroke="#b3bbc2" />
    <path d="m24.500 22.500 9-3 9 3v7c0 6-4 9.500-9 12-5-2.500-9-6-9-12Z" fill="#dfe5ea" stroke="#8a949d" />
    <path d="m26 23.500 7.500-2.500v9.500H26Z" fill="#3d7fc4" />
    <path d="M33.500 30.500H41c0 4.500-3 7.500-7.500 9.500Z" fill="#3d7fc4" />
    <path d="m33.500 21 7.500 2.500v7h-7.500ZM26 30.500h7.500V40C29 38 26 35 26 30.500Z" fill="#f0c23c" />
  </svg>
);

const HistoryIcon = ({ forward }: { forward?: boolean }) => (
  <svg width="25" height="26" viewBox="0 0 25 26">
    <defs>
      <linearGradient id="backFill" x1="0" y1="0" x2="0" y2="1">
        <stop offset="0" stopColor="#8fb2dc" />
        <stop offset=".45" stopColor="#2a5ea8" />
        <stop offset=".5" stopColor="#0c3480" />
        <stop offset="1" stopColor="#33c4f0" />
      </linearGradient>
      <linearGradient id="forwardFill" x1="0" y1="0" x2="0" y2="1">
        <stop offset="0" stopColor="#dbe4ef" />
        <stop offset=".5" stopColor="#bccbdd" />
        <stop offset="1" stopColor="#dbe7f3" />
      </linearGradient>
    </defs>
    <circle cx="12.500" cy="13" r="11.700" fill={forward ? "url(#forwardFill)" : "url(#backFill)"} stroke={forward ? "#74889f" : "#3b567c"} strokeWidth="1.300" />
    {forward ? (
      <path d="M6 13h9M11.500 8.500 16.500 13l-5 4.500" fill="none" stroke="#cbd7e5" strokeWidth="2" />
    ) : (
      <path d="M4.500 13l7-6.500 1.800 2L11 11h8.500v4H11l2.300 2.500-1.800 2Z" fill="#fff" />
    )}
  </svg>
);

const DownTriangle = ({ fill = "#1d2b45", w = 8 }: { fill?: string; w?: number }) => (
  <svg width={w} height="5" viewBox="0 0 9 5">
    <path d="M0 0h9L4.500 5Z" fill={fill} />
  </svg>
);

const CrumbArrow = () => (
  <svg width="4" height="8" viewBox="0 0 4 8">
    <path d="M0 0v8l4-4Z" fill="#111" />
  </svg>
);

const OpenIcon = () => (
  <svg width="15" height="16" viewBox="0 0 15 16">
    <path d="M1.500.500h9.500l3 3v12h-12.500Z" fill="#f6f8fa" stroke="#6c7580" />
    <path d="M2.500 4.500h10v8h-10Z" fill="#fff" stroke="#22305a" />
    <path d="M2.500 5.500h10" stroke="#22305a" strokeWidth="2" />
    <path d="M5 9v2M7.500 8.500v3M10 9v2" stroke="#22305a" strokeWidth="1.500" />
  </svg>
);

const WmpIcon = () => (
  <svg width="30" height="28" viewBox="0 0 30 28">
    <path d="M22 3h5v20l-5 3Z" fill="#6fb2da" stroke="#4f86ae" strokeWidth=".7" />
    <path d="M19 3h5v21l-5 2Z" fill="#a8d3ea" stroke="#5b93ba" strokeWidth=".7" />
    <rect x="2" y="2.500" width="18" height="23" fill="#a9cde8" stroke="#5d93bd" />
    <circle cx="11.500" cy="14" r="9" fill="#ef7d22" stroke="#f5c79c" strokeWidth="1" />
    <path d="m8 8.500 9.500 5.500L8 19.500Z" fill="#fff" />
  </svg>
);

const ExplorerTaskIcon = () => (
  <svg width="34" height="30" viewBox="0 0 34 30">
    <path d="M2 4V1h10l2 3h18v23H2Z" fill="#ecd273" stroke="#b8973a" />
    <path d="M3 6h28v21H3Z" fill="#f9eba8" stroke="#d4b85a" />
    <path d="M5 3.500h4M14 5h4M22 6.500h4" stroke="#fff" strokeWidth="3" />
    <path d="M5 2.500h2" stroke="#3f9a3f" strokeWidth="2" />
    <path d="M14 4h2" stroke="#cc4a2c" strokeWidth="2" />
    <path d="M22 5.500h2" stroke="#3a78c8" strokeWidth="2" />
    <path d="M3 12h28M3 17h28" stroke="#f0d98a" />
    <path d="M6 29V19c0-1.500 1-2.500 2.500-2.500h17c1.500 0 2.500 1 2.500 2.500v10h-6v-6H12v6Z" fill="#a5daf3" stroke="#4b9dcb" />
    <path d="M9 19.500h16" stroke="#e3f6fd" strokeWidth="1.500" />
  </svg>
);

const StartOrb = () => (
  <svg width="38" height="38" viewBox="0 0 38 38">
    <defs>
      <radialGradient id="orb" cx=".5" cy=".9" r=".9">
        <stop offset="0" stopColor="#3fc8e8" />
        <stop offset=".4" stopColor="#1e6ea6" />
        <stop offset=".75" stopColor="#274f7c" />
        <stop offset="1" stopColor="#9db7cc" />
      </radialGradient>
    </defs>
    <circle cx="19" cy="19" r="17.700" fill="url(#orb)" stroke="#2c4a68" />
    <path d="M3.500 15a16 16 0 0 1 31 0c-9 4-22 4-31 0Z" fill="#fff" opacity=".22" />
    <path d="M10.500 10.500c3-1.500 5-1 7.500.5l-2 7c-2.500-1.500-5-1.500-7.500-.3Z" fill="#e8562a" />
    <path d="M19.500 11.700c3 1.500 6 1.500 9 0l-2 7.300c-3 1.200-6 1-9-.3Z" fill="#8cc33c" />
    <path d="M8 19.500c2.500-1.200 5-1 7.500.4l-2 7c-2.500-1.600-5-1.600-7.500-.4Z" fill="#3c9be0" />
    <path d="M17 20.600c3 1.400 6 1.500 9 .3l-2 7c-3 1.200-6 1-9-.4Z" fill="#fbc52e" />
  </svg>
);

/* ---------- data ---------- */

const files: { icon: React.ReactNode; name: string; date: string; type: string; size: string; selected?: boolean }[] = [
  { icon: <FolderIcon />, name: "BossDaMajor", date: "4/1/2021 3:40 PM", type: "File folder", size: "" },
  { icon: <DllIcon />, name: "AxInterop.ShockwaveFlashObjects.dll", date: "7/30/2021 4:55 PM", type: "Application extens...", size: "17 KB" },
  { icon: <FlagIcon />, name: "Chris@Spark", date: "9/14/2018 4:54 PM", type: "Application", size: "496 KB" },
  { icon: <WindowAppIcon shield />, name: "Cuberates@TaskILL", date: "5/11/2019 11:36 AM", type: "Application", size: "31 KB" },
  { icon: <WindowAppIcon shield />, name: "Endermanch@000", date: "9/21/2016 11:02 PM", type: "Application", size: "6,820 KB", selected: true },
  { icon: <WindowAppIcon />, name: "Endermanch@Ana", date: "9/21/2011 1:09 AM", type: "Application", size: "2,123 KB" },
  { icon: <svg width="16" height="16" />, name: "Endermanch@ColorBug", date: "1/15/2007 6:18 PM", type: "Application", size: "54 KB" },
  { icon: <PuzzleIcon />, name: "Endermanch@DesktopPuzzle", date: "1/15/2007 6:21 PM", type: "Application", size: "240 KB" },
  { icon: <DownloaderIcon />, name: "Endermanch@FreeYoutubeDownloader", date: "1/22/2016 12:15 PM", type: "Application", size: "397 KB" },
  { icon: <PlayTileIcon />, name: "Endermanch@HMBlocker", date: "12/17/2014 12:46 ...", type: "Application", size: "48 KB" },
  { icon: <BombIcon />, name: "Endermanch@Illerka.C", date: "5/1/2016 4:28 AM", type: "Application", size: "379 KB" },
  { icon: <WindowAppIcon shield />, name: "Endermanch@MEMZ", date: "12/3/2016 5:51 AM", type: "Application", size: "15 KB" },
  { icon: <ManagerIcon />, name: "GLManager", date: "7/8/2022 6:21 AM", type: "Application", size: "14,644 KB" },
  { icon: <DllIcon />, name: "Interop.ShockwaveFlashObjects.dll", date: "7/30/2021 4:55 PM", type: "Application extens...", size: "22 KB" },
  { icon: <HeartIcon />, name: "MrsMajor2.0", date: "8/18/2019 4:24 AM", type: "Application", size: "26,260 KB" },
  { icon: <FigureIcon />, name: "MrsMajor3.0", date: "3/19/2020 5:07 AM", type: "Application", size: "382 KB" },
  { icon: <FrameworkIcon />, name: "NETFramework", date: "7/25/2018 8:18 AM", type: "Application", size: "1,401 KB" },
  { icon: <EscapeIcon />, name: "NoEscape", date: "11/29/2020 4:11 AM", type: "Application", size: "667 KB" },
  { icon: <WordIcon />, name: "YouAreAnIdiot", date: "7/30/2021 4:55 PM", type: "Application", size: "425 KB" },
];

const places: { icon: React.ReactNode; label: string; active?: boolean; items: [React.ReactNode, string][] }[] = [
  {
    icon: <StarIcon />,
    label: "Favorites",
    active: true,
    items: [
      [<DesktopPlaceIcon />, "Desktop"],
      [<DownloadsIcon />, "Downloads"],
      [<RecentIcon />, "Recent Places"],
    ],
  },
  {
    icon: <LibrariesIcon />,
    label: "Libraries",
    items: [
      [<DocumentIcon />, "Documents"],
      [<MusicIcon />, "Music"],
      [<PicturesIcon />, "Pictures"],
      [<VideosIcon />, "Videos"],
    ],
  },
  { icon: <SmallComputerIcon />, label: "My Computer", items: [] },
  { icon: <NetworkIcon />, label: "Network", items: [] },
];

/* ---------- parts ---------- */

const WallpaperArt = () => (
  <Wallpaper viewBox="0 548 1024 180" preserveAspectRatio="none" aria-hidden="true">
    <g fill="none">
      <path d="M118 728C190 640 270 640 310 728Z" fill="#7fe0ff" opacity=".18" />
      <path d="M-5 680C20 665 60 620 100 590" stroke="#d5f6ff" strokeWidth="2" opacity=".65" />
      <path d="M-5 676C40 658 90 645 135 622" stroke="#e9fcff" strokeWidth="3" opacity=".6" />
      <path d="M-3 720C30 665 80 635 135 611" stroke="#7be07a" strokeWidth="3" />
      <path d="M118 728C180 705 290 712 360 716C470 716 560 705 640 685" stroke="#8fdcff" strokeWidth="3" opacity=".35" />
      <path d="M350 728C430 697 520 679 612 678.500" stroke="#8fe6ff" strokeWidth="2" opacity=".85" />
      <path d="M590 678C650 674 725 697 784 728H760C715 696 670 684 590 679Z" fill="#8fd4ff" opacity=".45" />
      <path d="M560 679C660 673 725 699 780 728H765C718 696 672 682 560 680.500Z" fill="#fff" />
    </g>
  </Wallpaper>
);

const SevenZipWindow = () => (
  <ArchiveWindow aria-label="7-Zip">
    <ArchiveTitle>
      <SevenZipIcon />
      C:\
    </ArchiveTitle>
    <ArchiveMenu>File</ArchiveMenu>
    <ArchiveTools>
      <AddButton type="button">
        <PlusIcon />
        Add
      </AddButton>
    </ArchiveTools>
    <ArchivePath>
      <UpFolderIcon />
      <PathBox>
        <FolderIcon />
      </PathBox>
    </ArchivePath>
    <ArchiveList>
      <ArchiveHeader>Name</ArchiveHeader>
      <ArchiveItem>
        <FolderIcon size={17} />
        Endermanch
      </ArchiveItem>
      <ScrollTrack>
        <svg width="5" height="8" viewBox="0 0 5 8">
          <path d="M4.500 0v8L0 4Z" fill="#333" />
        </svg>
        <ScrollThumb />
      </ScrollTrack>
    </ArchiveList>
    <ArchiveStatus>0 / 1 object(s) selected</ArchiveStatus>
  </ArchiveWindow>
);

const Explorer = () => (
  <ExplorerWindow aria-label="trojans">
    <TitleBar>
      <CaptionButton type="button" aria-label="Minimize">
        <svg width="13" height="8" viewBox="0 0 13 8">
          <rect x="1.500" y="3.500" width="10" height="4" rx=".5" fill="#fff" stroke="#46556a" />
        </svg>
      </CaptionButton>
      <CaptionButton type="button" aria-label="Restore">
        <svg width="12" height="10" viewBox="0 0 12 10">
          <path d="M1.500 1.500h9v7h-9Z" fill="#fff" stroke="#46556a" />
          <path d="M4.500 4.500h3v1h-3Z" fill="#b9c9dc" stroke="#46556a" />
        </svg>
      </CaptionButton>
      <CaptionButton type="button" aria-label="Close" $close>
        <svg width="12" height="10" viewBox="0 0 12 10">
          <path d="m2.500 1.500 7 7M9.500 1.500l-7 7" stroke="#4a2028" strokeWidth="4" />
          <path d="m2.500 1.500 7 7M9.500 1.500l-7 7" stroke="#fff" strokeWidth="2.500" />
        </svg>
      </CaptionButton>
    </TitleBar>

    <NavRow>
      <HistoryButtons>
        <button type="button" aria-label="Back">
          <HistoryIcon />
        </button>
        <button type="button" aria-label="Forward">
          <HistoryIcon forward />
        </button>
        <button type="button" aria-label="Recent pages">
          <svg width="10" height="7" viewBox="0 0 10 7">
            <path d="M.7.700h8.600L5 6Z" fill="#4f9fc0" stroke="#1d3f5c" />
          </svg>
        </button>
      </HistoryButtons>
      <AddressBar aria-label="Address">
        <Crumbs>
          <FolderIcon />
          <CrumbArrow />
          <button type="button">EndermanchDatabase</button>
          <CrumbArrow />
          <button type="button">trojans</button>
          <CrumbArrow />
        </Crumbs>
        <button type="button" aria-label="Previous locations">
          <DownTriangle fill="#111" />
        </button>
        <RefreshButton type="button" aria-label="Refresh">
          <svg width="15" height="14" viewBox="0 0 15 14">
            <path d="M6.500 1C4 1.200 3.500 3 3.500 5.500H1L4.500 9.500 8 5.500H5.500C5.500 3.500 5.700 2.500 6.500 1Z" fill="#2f7fc4" stroke="#1c558f" strokeWidth=".5" />
            <path d="M9 13c2.500-.2 3-2 3-4.500h2.500L11 4.500 7.500 8.500H10C10 10.500 9.800 11.500 9 13Z" fill="#23609c" stroke="#1c4a7c" strokeWidth=".5" />
          </svg>
        </RefreshButton>
      </AddressBar>
      <SearchBox>
        <SearchInput type="text" placeholder="Search trojans" aria-label="Search trojans" />
        <svg width="14" height="14" viewBox="0 0 14 14">
          <circle cx="8.500" cy="5" r="3.800" fill="#e4f0fa" stroke="#4c759e" strokeWidth="1.500" />
          <path d="m5.600 8-4.200 4.500" stroke="#3b5f87" strokeWidth="2.200" strokeLinecap="round" />
        </svg>
      </SearchBox>
    </NavRow>

    <CommandBar>
      <CommandButton type="button" $width={92}>
        Organize
        <DownTriangle />
      </CommandButton>
      <CommandButton type="button" $width={78}>
        <OpenIcon />
        Open
      </CommandButton>
      <CommandButton type="button" $width={99}>
        Share with
        <DownTriangle />
      </CommandButton>
      <CommandButton type="button">New folder</CommandButton>
      <ViewTools>
        <ViewButton type="button" aria-label="Change your view">
          <svg width="17" height="13" viewBox="0 0 17 13">
            <path d="M1.500.500h3v12h-3Z" fill="#eef3f8" stroke="#66788c" />
            <path d="M3 2v9" stroke="#66788c" strokeDasharray="1 2" />
            <path d="M6 2.500h10M6 6.500h10M6 10.500h10" stroke="#53667c" strokeDasharray="4 1" />
          </svg>
          <DownTriangle />
        </ViewButton>
        <button type="button" aria-label="Show the preview pane">
          <svg width="17" height="15" viewBox="0 0 17 15">
            <rect x=".5" y=".5" width="16" height="14" fill="#fff" stroke="#4b708e" />
            <path d="M1 2h15" stroke="#8fb2cc" strokeWidth="2" />
            <rect x="10.500" y="3" width="5" height="11" fill="#6bb5c4" stroke="#4b8a9c" />
          </svg>
        </button>
        <button type="button" aria-label="Get help">
          <svg width="17" height="17" viewBox="0 0 17 17">
            <circle cx="8.500" cy="8.500" r="7.500" fill="#2c4cae" stroke="#8a99b8" strokeWidth="1.500" />
            <text x="8.500" y="13" textAnchor="middle" fontFamily="Liberation Sans, sans-serif" fontWeight="700" fontSize="12" fill="#fff">?</text>
          </svg>
        </button>
      </ViewTools>
    </CommandBar>

    <Body>
      <Sidebar>
        {places.map((group) => (
          <ul key={group.label}>
            <li>
              <NavItem href="#" $active={group.active}>
                {group.icon}
                {group.label}
              </NavItem>
            </li>
            {group.items.map(([icon, label]) => (
              <li key={label}>
                <NavItem href="#" $child>
                  {icon}
                  {label}
                </NavItem>
              </li>
            ))}
          </ul>
        ))}
      </Sidebar>
      <FilePane>
        <FileTable>
          <colgroup>
            <col width="257" />
            <col width="120" />
            <col width="120" />
            <col width="77" />
            <col width="3" />
          </colgroup>
          <thead>
            <tr>
              <HeadCell $first>
                <SortMark width="8" height="4" viewBox="0 0 8 4">
                  <path d="M0 4h8L4 0Z" fill="#6f93ac" />
                </SortMark>
                <span>Name</span>
              </HeadCell>
              <HeadCell>
                <span>Date modified</span>
              </HeadCell>
              <HeadCell>
                <span>Type</span>
              </HeadCell>
              <HeadCell colSpan={2}>
                <span>Size</span>
              </HeadCell>
            </tr>
          </thead>
          <tbody>
            {files.map((file) => (
              <FileRow key={file.name} $selected={file.selected}>
                <NameCell>
                  <FileName>
                    {file.icon}
                    {file.name}
                  </FileName>
                </NameCell>
                <Cell>{file.date}</Cell>
                <Cell>{file.type}</Cell>
                <Cell $right>{file.size}</Cell>
              </FileRow>
            ))}
          </tbody>
        </FileTable>
      </FilePane>
    </Body>

    <DetailsPane>
      <LargeAppIcon />
      <DetailsGrid>
        <Value>Endermanch@000</Value>
        <Term>Date modified:</Term>
        <Value>9/21/2016 11:02 PM</Value>
        <Term>Date created:</Term>
        <Value>7/11/2022 9:28 AM</Value>
        <Value $muted>Application</Value>
        <Term>Size:</Term>
        <Value>6.66 MB</Value>
      </DetailsGrid>
    </DetailsPane>
  </ExplorerWindow>
);

export default function App() {
  return (
    <>
      <GlobalStyle />
      <Screen>
        <Desktop>
          <Glow />
          <WallpaperArt />
          <Shortcut type="button" $x={0} $y={9}>
            <ComputerIcon size={46} />
            My Computer
          </Shortcut>
          <Shortcut type="button" $x={0} $y={111}>
            <WagonIcon />
            DataWagon...
          </Shortcut>
          <Shortcut type="button" $x={0} $y={215}>
            <ChromeIcon shortcut />
            <span>
              Google
              <br />
              Chrome
            </span>
          </Shortcut>
          <Shortcut type="button" $x={0} $y={318}>
            <BigFolderIcon />
            Enderman...
          </Shortcut>
          <BinShortcut type="button" $x={0} $y={0}>
            <BinIcon />
            Recycle Bin
          </BinShortcut>
          <SevenZipWindow />
          <Explorer />
          <Cursor width="28" height="32" viewBox="0 0 28 32" aria-hidden="true">
            <circle cx="16" cy="10" r="7" fill="#dff4ee" stroke="#5cb5a8" strokeWidth="3" />
            <path d="M16 3a7 7 0 0 1 7 7" fill="none" stroke="#a4ddd2" strokeWidth="3" />
            <path d="M1 10v16l4-3.500 3 6.500 3-1.500-3-6h5Z" fill="#fff" stroke="#222" />
          </Cursor>
        </Desktop>
        <Taskbar>
          <StartButton type="button" aria-label="Start">
            <StartOrb />
          </StartButton>
          <TaskList>
            <TaskButton type="button" aria-label="Windows Explorer" $open $front>
              <ExplorerTaskIcon />
            </TaskButton>
            <TaskButton type="button" aria-label="Windows Media Player">
              <WmpIcon />
            </TaskButton>
            <TaskButton type="button" aria-label="Google Chrome" $open>
              <ChromeIcon size={32} />
            </TaskButton>
            <TaskButton type="button" aria-label="7-Zip" $open>
              <SevenZipIcon w={32} h={25} />
            </TaskButton>
          </TaskList>
          <Tray>
            <svg width="16" height="16" viewBox="0 0 16 16">
              <path d="M5.500 3.500h9v8h-9Z" fill="#5c6f86" stroke="#fff" strokeWidth="1.300" />
              <path d="M7 14.500h6M10 12v2" stroke="#fff" strokeWidth="1.500" />
              <path d="M1 1v3.500h4V1M3 4.500V14h3" fill="none" stroke="#fff" strokeWidth="1.300" />
            </svg>
            <svg width="16" height="16" viewBox="0 0 16 16">
              <path d="M1 5.500h2.500L7.500 2v12l-4-3.500H1Z" fill="#fff" />
              <path d="M9.500 5.500c1 1.500 1 3.500 0 5M11.500 4c1.800 2.500 1.800 5.500 0 8M13.500 2.500c2.500 3.500 2.500 7.500 0 11" fill="none" stroke="#e9eff5" />
            </svg>
            <Clock>
              9:28 AM
              <br />
              7/11/2022
            </Clock>
          </Tray>
          <ShowDesktop type="button" aria-label="Show desktop" />
        </Taskbar>
      </Screen>
    </>
  );
}
